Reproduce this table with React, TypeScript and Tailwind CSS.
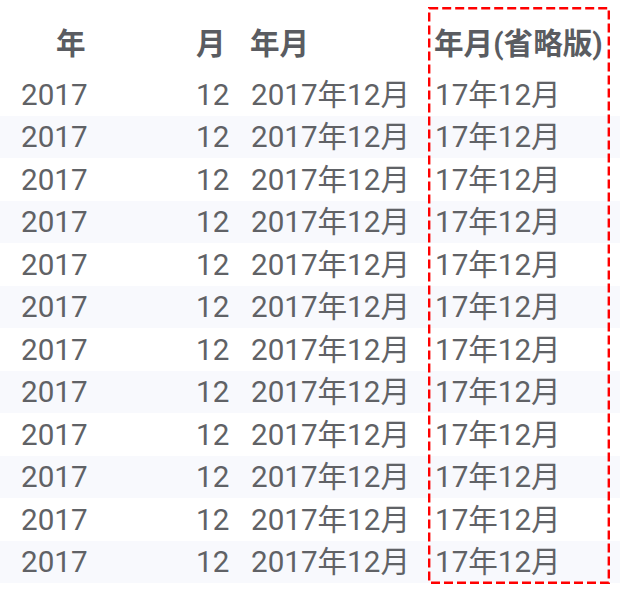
import React from "react";

const rows = Array.from({ length: 12 }, () => ({
  y: "2017",
  m: "12",
  ym: "2017年12月",
  short: "17年12月",
}));

export default function App() {
  return (
    <div
      className="relative w-[622px] h-[597px] bg-white text-[29.6px] text-[#606266]"
      style={{ fontFamily: 'Roboto, "Noto Sans CJK JP", sans-serif' }}
    >
      <div className="w-[620px]">
        <div className="flex h-[73px] pt-[17px] items-center font-bold text-[#5a5c61] leading-none">
          <div className="w-[188px] pl-[56px]">年</div>
          <div className="w-[54px] pl-[8px]">月</div>
          <div className="w-[185px] pl-[8px]">年月</div>
          <div className="flex-1 pl-[7px] whitespace-nowrap">年月(省略版)</div>
        </div>
        {rows.map((r, i) => (
          <div
            key={i}
            className={`flex h-[42.5px] pt-[3px] items-center leading-none ${
              i % 2 === 1 ? "bg-[#f8f9fd]" : "bg-white"
            }`}
          >
            <div className="w-[188px] pl-[21px]">{r.y}</div>
            <div className="w-[54px] pl-[8px]">{r.m}</div>
            <div className="w-[185px] pl-[9px] whitespace-nowrap">{r.ym}</div>
            <div className="flex-1 pl-[8px] whitespace-nowrap">{r.short}</div>
          </div>
        ))}
      </div>
      <svg
        className="absolute left-[428px] top-[7px] pointer-events-none"
        width="182"
        height="577"
        viewBox="0 0 182 577"
      >
        <rect
          x="1.2"
          y="1.2"
          width="179.6"
          height="574.6"
          fill="none"
          stroke="#ff0000"
          strokeWidth="2.4"
          strokeDasharray="9 4"
        />
      </svg>
    </div>
  );
}
